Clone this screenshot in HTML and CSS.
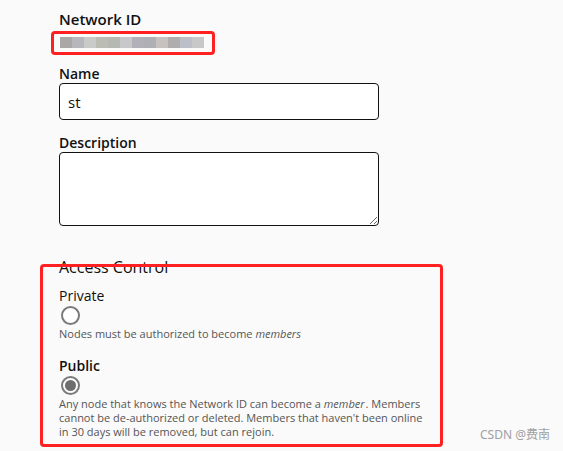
FILE: index.html
```html
<!DOCTYPE html>
<html>
<head>
<meta charset="utf-8">
<link rel="stylesheet" href="styles.css">
</head>
<body>
<main class="form">
  <section class="field field-id">
    <div class="label">Network ID</div>
    <div class="id-value">
      <span class="redact"><i style="background:#aaa8a6"></i><i style="background:#b7b6bd"></i><i style="background:#c9cbc8"></i><i style="background:#bbbdb5"></i><i style="background:#b5b8b3"></i><i style="background:#c8c7c9"></i><i style="background:#b2b0b8"></i><i style="background:#aeb0b5"></i><i style="background:#c7c2bf"></i><i style="background:#b0aeac"></i><i style="background:#bdbfc8"></i><i style="background:#c8c8c8"></i></span>
      <span class="mark mark-id"></span>
    </div>
  </section>

  <section class="field">
    <label class="label" for="name">Name</label>
    <input id="name" class="input" type="text" value="st">
  </section>

  <section class="field">
    <label class="label" for="desc">Description</label>
    <textarea id="desc" class="textarea"></textarea>
  </section>

  <section class="access">
    <span class="mark mark-access"></span>
    <h3 class="access-title">Access Control</h3>
    <div class="option">
      <div class="option-label private">Private</div>
      <span class="radio"></span>
      <p class="help">Nodes must be authorized to become <em>members</em></p>
    </div>
    <div class="option option-public">
      <div class="option-label">Public</div>
      <span class="radio checked"></span>
      <p class="help">Any node that knows the Network ID can become a <em>member</em>. Members cannot be de-authorized or deleted. Members that haven't been online in 30 days will be removed, but can rejoin.</p>
    </div>
  </section>
</main>
<div class="watermark">CSDN @费南</div>
</body>
</html>
```
FILE: styles.css
```css
html, body {
  margin: 0;
  padding: 0;
}
body {
  background: #fafafa;
  font-family: "Open Sans", "Noto Sans", sans-serif;
  color: #111;
  width: 563px;
  height: 451px;
  overflow: hidden;
  position: relative;
}
.form {
  padding: 9px 0 0 59px;
  width: 320px;
}
.field {
  display: flex;
  flex-direction: column;
}
.label {
  font-size: 14px;
  font-weight: 600;
  line-height: 19px;
  color: #111;
}
.field-id .label {
  font-size: 15px;
  line-height: 20px;
}
.id-value {
  position: relative;
  height: 25px;
  margin-bottom: 10px;
}
.redact {
  display: flex;
  margin-top: 8px;
  margin-left: 1px;
  height: 11px;
}
.redact i {
  display: block;
  width: 12px;
  height: 11px;
}
.mark {
  position: absolute;
  border: 3px solid #ff2121;
  border-radius: 4px;
  pointer-events: none;
}
.mark-id {
  left: -8px;
  top: 2px;
  width: 158px;
  height: 18px;
}
.input {
  box-sizing: border-box;
  width: 320px;
  height: 37px;
  margin: 0;
  border: 1px solid #111;
  border-radius: 4px;
  background: #fff;
  padding: 0 8px;
  font: 15px "Open Sans", "Noto Sans", sans-serif;
  color: #111;
  outline: none;
  margin-bottom: 13px;
}
.textarea {
  box-sizing: border-box;
  width: 320px;
  height: 74px;
  margin: 0;
  border: 1px solid #111;
  border-radius: 4px;
  background: #fff;
  resize: vertical;
  outline: none;
}
.access {
  position: relative;
  margin-top: 30px;
  width: 370px;
}
.mark-access {
  left: -19px;
  top: 8px;
  width: 397px;
  height: 177px;
}
.access-title {
  margin: 0;
  font-size: 16px;
  font-weight: 400;
  line-height: 22px;
  color: #111;
}
.option {
  display: flex;
  flex-direction: column;
  align-items: flex-start;
}
.access-title + .option {
  margin-top: 8px;
}
.option-public {
  margin-top: 15px;
}
.option-label {
  font-size: 14px;
  font-weight: 600;
  line-height: 19px;
}
.option-label.private {
  font-weight: 500;
}
.radio {
  box-sizing: border-box;
  width: 19px;
  height: 19px;
  margin: 1px 0 0 2px;
  border: 2px solid #7a7a7a;
  border-radius: 50%;
  background: #fff;
  display: flex;
  align-items: center;
  justify-content: center;
}
.radio.checked::after {
  content: "";
  width: 11px;
  height: 11px;
  border-radius: 50%;
  background: #6e6e6e;
}
.help {
  margin: 2px 0 0;
  font-size: 11px;
  line-height: 14px;
  color: #555;
}
.help em {
  padding-right: 1px;
}
.watermark {
  position: absolute;
  right: 13px;
  bottom: 8px;
  font-family: "Noto Sans", "Noto Sans CJK SC", sans-serif;
  font-size: 12px;
  color: #a0a0a0;
}
```
